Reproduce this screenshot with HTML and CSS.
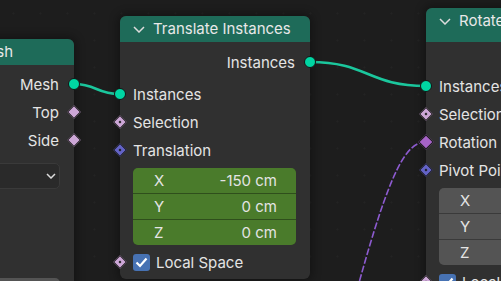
FILE: index.html
```html
<!DOCTYPE html>
<html lang="en">
<head>
    <meta charset="UTF-8">
    <meta name="viewport" content="width=device-width, initial-scale=1.0">
    <title>Geometry Nodes</title>
    <link rel="stylesheet" href="styles.css">
</head>
<body>

<div class="editor">

    <!-- Links between sockets -->
    <svg class="links" width="501" height="281" viewBox="0 0 501 281">
        <path class="link geo" d="M74 84 C 96 84 97 94 119 94"/>
        <path class="link geo" d="M310 62 C 368 62 368 86 426 86"/>
        <path class="link field" d="M426 142 C 406 142 390 170 357 290"/>
    </svg>

    <!-- Mesh node (cut off on the left) -->
    <div class="node node-mesh">
        <div class="node-header">
            <span class="title">Mesh</span>
        </div>
        <div class="node-body">
            <div class="row out"><span>Mesh</span><i class="socket geo"></i></div>
            <div class="row out"><span>Top</span><i class="socket bool"></i></div>
            <div class="row out"><span>Side</span><i class="socket bool"></i></div>
            <div class="dropdown">
                <svg width="10" height="6" viewBox="0 0 10 6"><polyline points="1,1 5,5 9,1"/></svg>
            </div>
            <div class="field-stub"></div>
        </div>
    </div>

    <!-- Translate Instances -->
    <div class="node node-translate">
        <div class="node-header">
            <svg class="chevron" width="12" height="7" viewBox="0 0 12 7"><polyline points="1,1 6,6 11,1"/></svg>
            <span class="title">Translate Instances</span>
        </div>
        <div class="node-body">
            <div class="row out"><span>Instances</span><i class="socket geo"></i></div>
            <div class="inputs">
                <div class="row in"><i class="socket geo"></i><span>Instances</span></div>
                <div class="row in"><i class="socket bool dot"></i><span>Selection</span></div>
                <div class="row in"><i class="socket vector dot"></i><span>Translation</span></div>
            </div>
            <div class="vec green">
                <div class="vec-row"><span>X</span><span>-150 cm</span></div>
                <div class="vec-row"><span>Y</span><span>0 cm</span></div>
                <div class="vec-row"><span>Z</span><span>0 cm</span></div>
            </div>
            <div class="row in check-row">
                <i class="socket bool dot"></i>
                <span class="checkbox"><svg width="13" height="11" viewBox="0 0 13 11"><polyline points="1.5,5.5 5,9 11.5,1.5"/></svg></span>
                <span>Local Space</span>
            </div>
        </div>
    </div>

    <!-- Rotate Instances (cut off on the right) -->
    <div class="node node-rotate">
        <div class="node-header">
            <svg class="chevron" width="12" height="7" viewBox="0 0 12 7"><polyline points="1,1 6,6 11,1"/></svg>
            <span class="title">Rotate Instances</span>
        </div>
        <div class="node-body">
            <div class="row out"><span>Instances</span><i class="socket geo"></i></div>
            <div class="row in"><i class="socket geo"></i><span>Instances</span></div>
            <div class="row in"><i class="socket bool dot"></i><span>Selection</span></div>
            <div class="row in"><i class="socket rotation"></i><span>Rotation</span></div>
            <div class="row in"><i class="socket vector dot"></i><span>Pivot Point</span></div>
            <div class="vec gray">
                <div class="vec-row"><span>X</span><span>0 m</span></div>
                <div class="vec-row"><span>Y</span><span>0 m</span></div>
                <div class="vec-row"><span>Z</span><span>0 m</span></div>
            </div>
            <div class="row in check-row">
                <i class="socket bool dot"></i>
                <span class="checkbox"><svg width="13" height="11" viewBox="0 0 13 11"><polyline points="1.5,5.5 5,9 11.5,1.5"/></svg></span>
                <span>Local Space</span>
            </div>
        </div>
    </div>

</div>

</body>
</html>
```

FILE: styles.css
```css
body {
    margin: 0;
    padding: 0;
    background-color: #1d1d1d;
    font-family: Inter, "DejaVu Sans", sans-serif;
    font-size: 15px;
    color: #e4e4e4;
    overflow: hidden;
}
.editor {
    position: relative;
    width: 501px;
    height: 281px;
    overflow: hidden;
    background-color: #1d1d1d;
    background-image: radial-gradient(circle, #232323 0.8px, transparent 1.2px);
    background-size: 27px 27px;
}

/* links */
.links {
    position: absolute;
    left: 0;
    top: 0;
    z-index: 0;
}
.link {
    fill: none;
}
.link.geo {
    stroke: #1bc79d;
    stroke-width: 2.6;
}
.link.field {
    stroke: #8d5bd0;
    stroke-width: 1.6;
    stroke-dasharray: 7 2;
}

/* nodes */
.node {
    position: absolute;
    z-index: 1;
    background-color: #303030;
    border-radius: 6px;
    box-shadow: 0 0 8px 3px rgba(0, 0, 0, 0.3);
}
.node-mesh {
    left: -80px;
    top: 39px;
    width: 154px;
    height: 260px;
}
.node-translate {
    left: 120px;
    top: 16px;
    width: 190px;
}
.node-rotate {
    left: 426px;
    top: 8px;
    width: 190px;
    height: 300px;
}
.node-header {
    height: 26px;
    display: flex;
    align-items: flex-start;
    gap: 8px;
    padding-left: 13px;
    background-color: #1e6b59;
    border-radius: 6px 6px 0 0;
}
.node-mesh .node-header {
    padding-left: 54px;
}
.node-rotate .node-header {
    height: 34px;
}
.title {
    line-height: 26px;
    color: #e8e8e8;
}
.chevron {
    margin-top: 10px;
}
.chevron polyline, .dropdown polyline {
    fill: none;
    stroke: #dcdcdc;
    stroke-width: 1.5;
}
.node-body {
    display: flex;
    flex-direction: column;
    padding-top: 6px;
    padding-bottom: 3px;
}
.node-mesh .node-body {
    padding-top: 5px;
}
.node-rotate .node-body {
    padding-top: 2px;
}
.inputs {
    margin-top: 4px;
}

/* rows */
.row {
    position: relative;
    height: 28px;
    display: flex;
    align-items: center;
    padding: 0 13px;
}
.row.out {
    justify-content: flex-end;
    padding-right: 15px;
}
.check-row {
    margin-top: 3px;
    gap: 6px;
}

/* sockets */
.socket {
    position: absolute;
    top: 50%;
    box-sizing: border-box;
}
.row.in .socket {
    left: 0;
}
.row.out .socket {
    left: 100%;
}
.socket.geo {
    width: 12px;
    height: 12px;
    border-radius: 50%;
    background-color: #00d6a3;
    border: 1px solid #141414;
    transform: translate(-50%, -50%);
}
.socket.bool, .socket.vector, .socket.rotation {
    width: 10px;
    height: 10px;
    border: 1px solid #1a1a1a;
    transform: translate(-50%, -50%) rotate(45deg);
}
.socket.bool {
    background-color: #cca6d6;
}
.socket.vector {
    background-color: #6363c7;
}
.socket.rotation {
    background-color: #a663c7;
    width: 11px;
    height: 11px;
}
.socket.dot::after {
    content: "";
    position: absolute;
    left: 3px;
    top: 3px;
    width: 2px;
    height: 2px;
    background-color: #1a1a1a;
}

/* vector fields */
.vec {
    margin: 4px 14px 0 13px;
    display: flex;
    flex-direction: column;
    gap: 1px;
    border-radius: 5px;
    overflow: hidden;
}
.vec-row {
    height: 25px;
    display: flex;
    align-items: center;
    justify-content: space-between;
    padding: 0 19px 0 21px;
}
.vec.green {
    background-color: #2f4f1c;
}
.vec.green .vec-row {
    background-color: #4a7b2b;
}
.vec.gray {
    background-color: #3a3a3a;
}
.vec.gray .vec-row {
    background-color: #545454;
}

/* checkbox */
.checkbox {
    width: 17px;
    height: 17px;
    border-radius: 3px;
    background-color: #4772b3;
    display: flex;
    align-items: center;
    justify-content: center;
}
.checkbox polyline {
    fill: none;
    stroke: #ffffff;
    stroke-width: 2.2;
}

/* mesh node extras */
.dropdown {
    height: 26px;
    margin: 9px 14px 0 14px;
    box-sizing: border-box;
    border: 1px solid #3a3a3a;
    border-radius: 5px;
    background-color: #2a2a2a;
    display: flex;
    align-items: center;
    justify-content: flex-end;
    padding-right: 3px;
}
.field-stub {
    height: 20px;
    margin: 89px 14px 0 14px;
    border-radius: 5px;
    background-color: #545454;
}
```
